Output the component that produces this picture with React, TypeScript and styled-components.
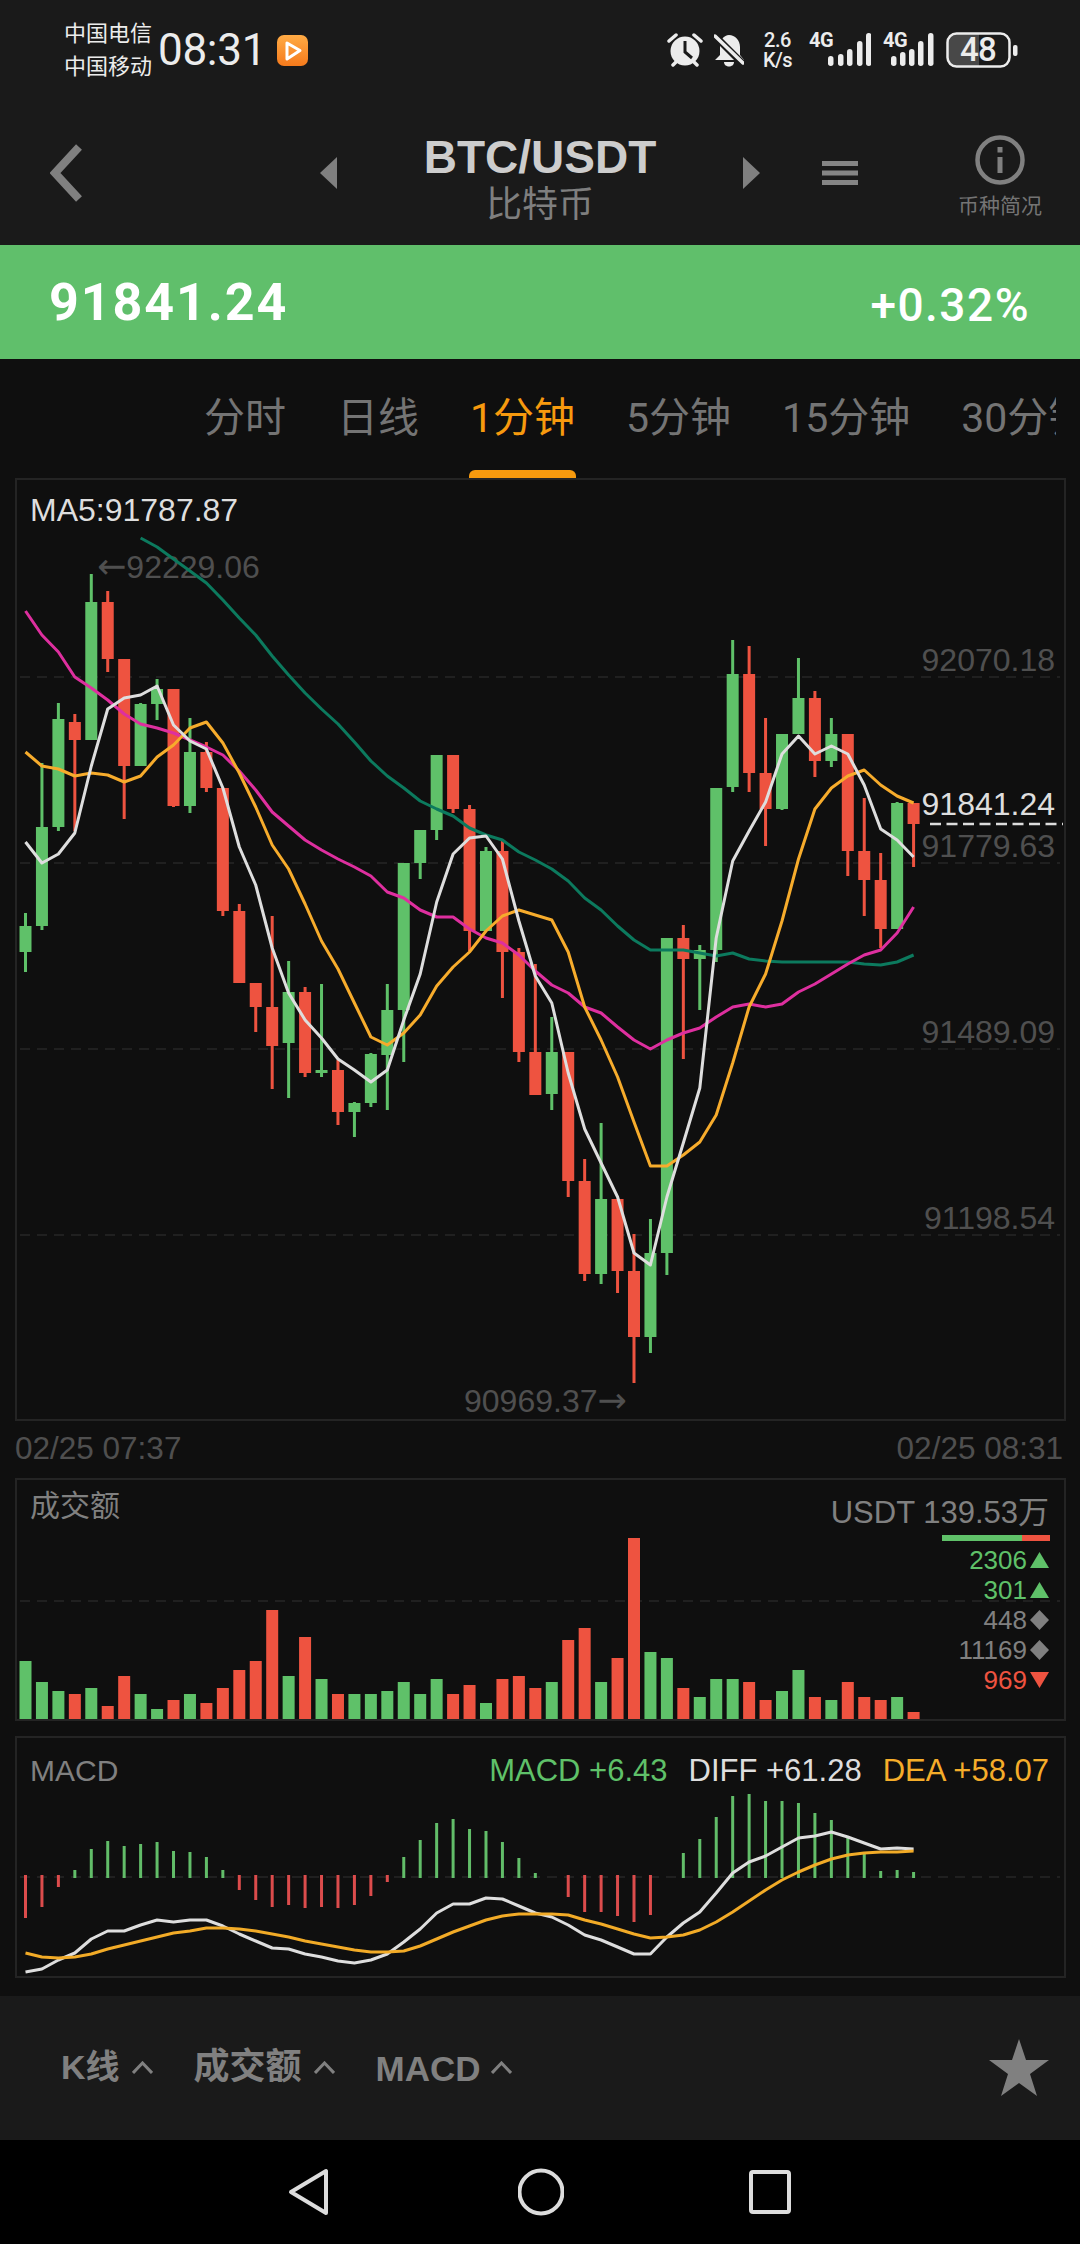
import React from "react";
import styled, { createGlobalStyle } from "styled-components";

const GREEN = "#5fc169";
const RED = "#ee5340";
const MUTED = "#4f4f4f";
const SANS = `"Liberation Sans", Arial, "Noto Sans CJK SC", sans-serif`;
const UI = `Roboto, "Noto Sans CJK SC", sans-serif`;

type CandleType = [number, number, number, number, "g" | "r"];

// high, body top, body bottom, low, in page pixels
const candles: CandleType[] = [
  [913, 926, 952, 972, "g"],
  [763, 827, 926, 930, "g"],
  [703, 719, 827, 831, "g"],
  [714, 722, 740, 831, "r"],
  [574, 602, 740, 740, "g"],
  [591, 602, 659, 672, "r"],
  [659, 659, 766, 819, "r"],
  [703, 704, 766, 766, "g"],
  [679, 689, 704, 720, "g"],
  [689, 689, 806, 807, "r"],
  [718, 752, 806, 813, "g"],
  [742, 752, 788, 792, "r"],
  [788, 788, 911, 916, "r"],
  [904, 911, 983, 983, "r"],
  [983, 983, 1007, 1032, "r"],
  [916, 1007, 1046, 1089, "r"],
  [961, 992, 1043, 1098, "g"],
  [987, 992, 1073, 1077, "r"],
  [984, 1070, 1073, 1077, "g"],
  [1060, 1070, 1112, 1125, "r"],
  [1102, 1103, 1112, 1137, "g"],
  [1053, 1054, 1103, 1107, "g"],
  [984, 1010, 1055, 1110, "g"],
  [863, 863, 1010, 1062, "g"],
  [830, 830, 863, 879, "g"],
  [755, 755, 830, 840, "g"],
  [755, 755, 809, 813, "r"],
  [805, 809, 931, 951, "r"],
  [847, 851, 931, 931, "g"],
  [841, 851, 952, 998, "r"],
  [948, 952, 1052, 1062, "r"],
  [964, 1052, 1095, 1095, "r"],
  [1017, 1052, 1094, 1110, "g"],
  [1052, 1052, 1181, 1197, "r"],
  [1159, 1181, 1274, 1281, "r"],
  [1123, 1199, 1274, 1284, "g"],
  [1199, 1199, 1271, 1293, "r"],
  [1234, 1271, 1337, 1383, "r"],
  [1219, 1253, 1337, 1353, "g"],
  [938, 938, 1253, 1275, "g"],
  [925, 938, 959, 1059, "r"],
  [945, 950, 959, 1010, "g"],
  [788, 788, 950, 962, "g"],
  [640, 674, 787, 792, "g"],
  [646, 674, 773, 792, "r"],
  [718, 773, 809, 846, "r"],
  [734, 734, 809, 810, "g"],
  [658, 698, 734, 734, "g"],
  [691, 698, 761, 777, "r"],
  [718, 734, 761, 767, "g"],
  [734, 734, 851, 876, "r"],
  [798, 851, 880, 916, "r"],
  [853, 880, 929, 948, "r"],
  [802, 803, 929, 929, "g"],
  [803, 803, 824, 867, "r"],
];

const ma5 = [842, 863, 854, 833, 766, 709, 698, 695, 686, 725, 741, 749, 788, 847, 885, 948, 993, 1020, 1038, 1059, 1070, 1082, 1070, 1020, 974, 902, 854, 838, 836, 859, 921, 976, 1003, 1073, 1129, 1163, 1197, 1253, 1265, 1197, 1143, 1088, 938, 861, 831, 802, 754, 736, 754, 746, 754, 785, 829, 840, 857];
const ma10 = [752, 766, 769, 776, 773, 775, 782, 776, 757, 745, 728, 722, 743, 773, 807, 845, 869, 904, 941, 969, 1003, 1037, 1045, 1033, 1015, 986, 967, 952, 931, 916, 910, 915, 920, 952, 1007, 1040, 1077, 1122, 1166, 1166, 1155, 1142, 1115, 1063, 1007, 974, 921, 859, 809, 788, 776, 770, 785, 796, 803];
const ma20 = [611, 635, 652, 677, 688, 700, 714, 724, 728, 733, 740, 747, 755, 771, 790, 812, 826, 840, 850, 859, 867, 876, 892, 898, 910, 917, 917, 929, 938, 943, 955, 971, 985, 993, 1007, 1013, 1027, 1040, 1049, 1040, 1033, 1028, 1017, 1007, 1004, 1007, 1004, 992, 984, 974, 964, 955, 950, 933, 907];
const ma30 = [538, 547, 559, 571, 583, 600, 618, 635, 656, 675, 693, 709, 724, 742, 761, 776, 788, 801, 809, 816, 828, 835, 840, 852, 860, 869, 881, 898, 910, 926, 940, 950, 950, 950, 953, 956, 953, 959, 961, 962, 962, 962, 962, 962, 964, 965, 962, 955];

const volumes = [58, 37, 28, 25, 31, 13, 43, 25, 10, 19, 25, 16, 31, 49, 58, 109, 43, 82, 40, 25, 25, 25, 28, 37, 25, 40, 25, 34, 16, 40, 43, 31, 37, 79, 91, 37, 61, 181, 67, 61, 31, 22, 40, 40, 37, 19, 28, 49, 22, 19, 37, 22, 19, 22, 7];

// histogram end, in page pixels
const histogram = [1918, 1907, 1887, 1870, 1849, 1841, 1846, 1844, 1842, 1851, 1852, 1857, 1870, 1890, 1900, 1907, 1905, 1908, 1907, 1908, 1905, 1896, 1882, 1857, 1840, 1823, 1819, 1829, 1831, 1842, 1858, 1873, 1882, 1897, 1912, 1912, 1916, 1922, 1915, 1873, 1853, 1839, 1817, 1796, 1794, 1801, 1801, 1803, 1813, 1820, 1838, 1854, 1871, 1870, 1872];
const histogramUp = "rrrggggggggggrrrrrrrrrrggggggggggrrrrrrrggggggggggggggggg".split("");
const diff = [1972, 1969, 1960, 1953, 1939, 1931, 1931, 1925, 1920, 1922, 1920, 1920, 1926, 1934, 1941, 1948, 1949, 1954, 1957, 1961, 1963, 1960, 1954, 1942, 1929, 1913, 1904, 1904, 1898, 1899, 1906, 1913, 1917, 1925, 1935, 1940, 1947, 1954, 1954, 1937, 1923, 1912, 1893, 1873, 1862, 1856, 1847, 1838, 1836, 1832, 1837, 1843, 1849, 1848, 1849];
const dea = [1953, 1957, 1958, 1957, 1954, 1949, 1945, 1941, 1937, 1933, 1931, 1928, 1928, 1929, 1931, 1934, 1937, 1941, 1944, 1947, 1950, 1952, 1952, 1951, 1946, 1939, 1932, 1926, 1920, 1916, 1914, 1914, 1914, 1915, 1920, 1924, 1929, 1934, 1938, 1937, 1935, 1930, 1922, 1912, 1901, 1890, 1880, 1872, 1865, 1859, 1855, 1853, 1852, 1852, 1851];

const xAt = (i: number) => 25.5 + 16.446 * i;
const toPoints = (values: number[], start = 0) =>
  values.map((y, i) => `${xAt(i + start).toFixed(1)},${y}`).join(" ");

const GlobalStyle = createGlobalStyle`
  html, body {
    margin: 0;
    background: #0f0f0f;
  }
`;

const Page = styled.div`
  width: 1080px;
  height: 2244px;
  overflow: hidden;
  background: #0f0f0f;
  font-family: ${SANS};
`;

const Top = styled.div`
  height: 245px;
  background: #1a1a1a;
`;

const StatusBar = styled.div`
  height: 100px;
  display: flex;
  align-items: center;
  padding: 0 62px 0 64px;
  color: #ececec;
  font-family: ${UI};
`;

const Carriers = styled.div`
  display: flex;
  flex-direction: column;
  gap: 4px;
  margin-top: -1px;
  font-size: 22px;
  line-height: 29px;
`;

const Clock = styled.div`
  margin-left: 6px;
  font-size: 44px;
  letter-spacing: -0.3px;
`;

const AppBadge = styled.svg`
  margin-left: 11px;
  width: 31px;
  height: 31px;
`;

const StatusRight = styled.div`
  margin-left: auto;
  display: flex;
  align-items: center;
`;

const StatusIcon = styled.svg<{ $ml: number }>`
  display: block;
  height: 36px;
  margin-left: ${(p) => p.$ml}px;
`;

const Speed = styled.div`
  margin-left: 18px;
  width: 31px;
  display: flex;
  flex-direction: column;
  align-items: center;
  font-size: 20px;
  line-height: 20px;
  font-weight: 500;
  letter-spacing: -0.5px;
`;

const Sim = styled.div<{ $ml: number; $width: number }>`
  position: relative;
  width: ${(p) => p.$width}px;
  height: 36px;
  margin-left: ${(p) => p.$ml}px;
`;

const SimLabel = styled.span`
  position: absolute;
  left: 0;
  top: -3px;
  font-size: 20px;
  line-height: 22px;
  font-weight: 700;
  letter-spacing: -0.5px;
`;

const SimBars = styled.svg`
  display: block;
  width: 100%;
  height: 100%;
`;

const Battery = styled.div`
  position: relative;
  width: 72px;
  height: 36px;
  margin-left: 12px;
`;

const BatteryLevel = styled.span`
  position: absolute;
  left: 14px;
  top: -1px;
  font-size: 33px;
  line-height: 38px;
  font-weight: 500;
  letter-spacing: -0.8px;
`;

const Header = styled.div`
  height: 145px;
  display: grid;
  grid-template-columns: 50px 270px 17px 406px 17px 62px 36px 1fr;
  align-items: center;
`;

const TitleBlock = styled.div`
  grid-column: 4;
  display: flex;
  flex-direction: column;
  align-items: center;
  margin-top: 12px;
`;

const Pair = styled.div`
  font-family: ${SANS};
  font-weight: 700;
  font-size: 46px;
  line-height: 52px;
  color: #cdcdcd;
`;

const PairName = styled.div`
  font-family: ${UI};
  font-size: 36px;
  line-height: 44px;
  color: #7f7f7f;
`;

const BackIcon = styled.svg`
  grid-column: 2;
  width: 33px;
  height: 58px;
`;

const ArrowIcon = styled.svg<{ $column: number }>`
  grid-column: ${(p) => p.$column};
  width: 17px;
  height: 32px;
`;

const MenuIcon = styled.svg`
  grid-column: 7;
  width: 36px;
  height: 24px;
`;

const InfoBlock = styled.div`
  grid-column: 8;
  justify-self: start;
  display: flex;
  flex-direction: column;
  align-items: center;
  margin: 8px 0 0 100px;
  font-family: ${UI};
  font-size: 21px;
  line-height: 26px;
  color: #747474;
`;

const InfoIcon = styled.svg`
  width: 50px;
  height: 50px;
  margin-bottom: 8px;
`;

const PriceBar = styled.div`
  height: 114px;
  padding: 0 50px 0 49px;
  display: flex;
  align-items: center;
  justify-content: space-between;
  background: #60bf6b;
  color: #fff;
  font-family: ${UI};
`;

const Price = styled.div`
  font-size: 52px;
  font-weight: 700;
  letter-spacing: 1.9px;
`;

const Change = styled.div`
  font-size: 46px;
  font-weight: 500;
  letter-spacing: 1.5px;
  margin-top: 6px;
`;

const Tabs = styled.div`
  height: 119px;
  width: 1056px;
  padding-left: 204px;
  box-sizing: border-box;
  overflow: hidden;
  display: flex;
  gap: 51px;
  align-items: flex-start;
  flex-wrap: nowrap;
`;

const Tab = styled.div<{ $active?: boolean }>`
  position: relative;
  height: 119px;
  flex: none;
  padding-top: 32px;
  box-sizing: border-box;
  font-family: ${UI};
  font-size: 41px;
  line-height: 54px;
  color: ${(p) => (p.$active ? "#f79a0e" : "#747474")};

  &::after {
    content: "";
    display: ${(p) => (p.$active ? "block" : "none")};
    position: absolute;
    left: -1px;
    right: -1px;
    bottom: 0;
    height: 8px;
    border-radius: 6px 6px 0 0;
    background: #f79a0e;
  }
`;

const Panel = styled.div<{ $height: number; $mt?: number }>`
  position: relative;
  height: ${(p) => p.$height}px;
  margin: ${(p) => p.$mt || 0}px 14px 0 15px;
  box-sizing: border-box;
  border: 2px solid #242424;
`;

const ChartSvg = styled.svg`
  position: absolute;
  left: -2px;
  top: -2px;
  display: block;
`;

const Label = styled.div<{ $top: number; $left?: number; $right?: number; $bright?: boolean }>`
  position: absolute;
  top: ${(p) => p.$top}px;
  ${(p) => (p.$left !== undefined ? `left: ${p.$left}px;` : "")}
  ${(p) => (p.$right !== undefined ? `right: ${p.$right}px;` : "")}
  font-size: 32px;
  line-height: 36px;
  white-space: nowrap;
  color: ${(p) => (p.$bright ? "#dedede" : MUTED)};
`;

const Pointer = styled.span`
  font-family: "DejaVu Sans", sans-serif;
  font-size: 35px;
`;

const TimeAxis = styled.div`
  height: 57px;
  padding: 0 17px 2px 15px;
  box-sizing: border-box;
  display: flex;
  align-items: center;
  justify-content: space-between;
  font-size: 31.5px;
  color: ${MUTED};
`;

const PanelTitle = styled.div<{ $top: number }>`
  position: absolute;
  left: 13px;
  top: ${(p) => p.$top}px;
  font-family: ${SANS};
  font-size: 30px;
  line-height: 36px;
  color: #808080;
`;

const Total = styled.div`
  position: absolute;
  right: 15px;
  top: 15px;
  font-size: 31px;
  line-height: 36px;
  color: #808080;
`;

const RatioBar = styled.div`
  position: absolute;
  left: 925px;
  top: 55px;
  width: 108px;
  height: 6px;
  display: flex;
  background: ${RED};
`;

const RatioFill = styled.div`
  height: 100%;
  background: ${GREEN};
`;

const Stats = styled.div`
  position: absolute;
  right: 15px;
  top: 65px;
  display: flex;
  flex-direction: column;
  align-items: flex-end;
`;

const StatRow = styled.div<{ $color: string }>`
  height: 30px;
  display: flex;
  align-items: center;
  gap: 3px;
  font-size: 26px;
  color: ${(p) => p.$color};
`;

const markerShapes = {
  up: "polygon(50% 0, 100% 100%, 0 100%)",
  down: "polygon(0 0, 100% 0, 50% 100%)",
  flat: "polygon(50% 0, 100% 50%, 50% 100%, 0 50%)",
};

const Marker = styled.span<{ $kind: keyof typeof markerShapes }>`
  width: 19px;
  height: ${(p) => (p.$kind === "flat" ? 20 : 16)}px;
  background: currentColor;
  clip-path: ${(p) => markerShapes[p.$kind]};
`;

const MacdLegend = styled.div`
  position: absolute;
  right: 15px;
  top: 15px;
  display: flex;
  gap: 21px;
  font-size: 31px;
  line-height: 36px;
  white-space: nowrap;
`;

const LegendItem = styled.span<{ $color: string }>`
  color: ${(p) => p.$color};
`;

const Footer = styled.div`
  height: 144px;
  margin-top: 18px;
  padding: 0 31px 0 61px;
  display: flex;
  align-items: center;
  background: #1a1a1a;
  color: #808080;
  font-family: ${SANS};
  font-weight: 700;
`;

const FooterItem = styled.div<{ $gap: number; $caretGap: number }>`
  display: flex;
  align-items: center;
  gap: ${(p) => p.$caretGap}px;
  margin-right: ${(p) => p.$gap}px;
`;

const FooterLabel = styled.span<{ $size: number; $shift: number }>`
  font-size: ${(p) => p.$size}px;
  transform: translateY(${(p) => p.$shift}px);
`;

const Caret = styled.svg`
  width: 21px;
  height: 13px;
  margin-top: -2px;
`;

const StarIcon = styled.svg`
  width: 60px;
  height: 57px;
  margin-left: auto;
  margin-top: -2px;
`;

const SystemNav = styled.div`
  height: 104px;
  display: grid;
  grid-template-columns: 288px 42px 188px 46px 185px 42px;
  align-items: center;
  background: #000;
`;

const NavIcon = styled.svg<{ $column: number }>`
  grid-column: ${(p) => p.$column};
  width: 100%;
  height: 48px;
`;

const Candle = ({ data, index }: { data: CandleType; index: number }) => {
  const x = xAt(index);
  const fill = data[4] === "g" ? GREEN : RED;
  return (
    <g fill={fill}>
      <rect x={x - 1.5} y={data[0]} width={3} height={data[3] - data[0]} />
      <rect x={x - 6} y={data[1]} width={12} height={Math.max(data[2] - data[1], 2)} />
    </g>
  );
};

const Line = ({ points, color, width = 3 }: { points: string; color: string; width?: number }) => (
  <polyline points={points} fill="none" stroke={color} strokeWidth={width} strokeLinejoin="round" />
);

const GridLine = ({ y }: { y: number }) => (
  <line x1={20} x2={1060} y1={y} y2={y} stroke="#272727" strokeWidth={1.5} strokeDasharray="10 7" />
);

const FooterCaret = () => (
  <Caret viewBox="0 0 21 13">
    <path d="M1 12 L10.5 2 L20 12" fill="none" stroke="#808080" strokeWidth="3" />
  </Caret>
);

const SignalBars = ({ bars, viewWidth }: { bars: number[][]; viewWidth: number }) => (
  <SimBars viewBox={`0 0 ${viewWidth} 36`}>
    {bars.map(([x, y]) => (
      <rect key={x} x={x} y={y} width={5.5} height={34 - y} rx={2.7} fill="#ececec" />
    ))}
  </SimBars>
);

export default function App() {
  return (
    <Page>
      <GlobalStyle />
      <Top>
        <StatusBar>
          <Carriers>
            <span>中国电信</span>
            <span>中国移动</span>
          </Carriers>
          <Clock>08:31</Clock>
          <AppBadge viewBox="0 0 31 31">
            <defs>
              <linearGradient id="badge" x1="0" y1="0" x2="0" y2="1">
                <stop offset="0" stopColor="#ffab45" />
                <stop offset="1" stopColor="#f57a1c" />
              </linearGradient>
            </defs>
            <rect width="31" height="31" rx="7" fill="url(#badge)" />
            <path d="M10 8 L10 24 L23 15.5 Z" fill="none" stroke="#fff" strokeWidth="3" strokeLinejoin="round" />
          </AppBadge>
          <StatusRight>
            <StatusIcon $ml={0} width="36" viewBox="0 0 36 36">
              <circle cx="18" cy="19" r="14.5" fill="#ececec" />
              <path d="M18 9 V20 L25 26" fill="none" stroke="#1a1a1a" strokeWidth="3" />
              <path d="M2 9 L9 3 M34 9 L27 3 M6 33 L9 30 M30 33 L27 30" stroke="#ececec" strokeWidth="3.5" strokeLinecap="round" />
            </StatusIcon>
            <StatusIcon $ml={11} width="30" viewBox="0 0 30 36">
              <path d="M1 28 L6 23 V14 C6 8 10 3 15 3 C21 3 26 8 26 15 V23 L30 28 Z" fill="#ececec" />
              <path d="M10 30 C10 36 20 36 20 30 Z" fill="#ececec" />
              <path d="M1 4 L29 32" stroke="#1a1a1a" strokeWidth="7" />
              <path d="M1 4 L29 31" stroke="#ececec" strokeWidth="3.5" strokeLinecap="round" />
            </StatusIcon>
            <Speed>
              <span>2.6</span>
              <span>K/s</span>
            </Speed>
            <Sim $ml={16} $width={62}>
              <SimLabel>4G</SimLabel>
              <SignalBars viewWidth={62} bars={[[19, 24], [29, 22], [38, 17], [48, 9], [57, 1]]} />
            </Sim>
            <Sim $ml={12} $width={51}>
              <SimLabel>4G</SimLabel>
              <SignalBars viewWidth={51} bars={[[8, 24], [17, 20], [26, 17], [35, 9], [45, 1]]} />
            </Sim>
            <Battery>
              <SimBars viewBox="0 0 72 36">
                <path d="M10 1.5 H33 V34.5 H10 A8.5 8.5 0 0 1 1.5 26 V10 A8.5 8.5 0 0 1 10 1.5 Z" fill="#484848" />
                <rect x="1.5" y="1.5" width="62" height="33" rx="9" fill="none" stroke="#ececec" strokeWidth="2.5" />
                <rect x="67" y="13" width="4.5" height="11" rx="2" fill="#ececec" />
              </SimBars>
              <BatteryLevel>48</BatteryLevel>
            </Battery>
          </StatusRight>
        </StatusBar>
        <Header>
          <BackIcon viewBox="0 0 33 58">
            <path d="M29 3 L5 29 L29 55" fill="none" stroke="#808080" strokeWidth="8" />
          </BackIcon>
          <ArrowIcon $column={3} viewBox="0 0 17 32">
            <path d="M17 0 V32 L0 16 Z" fill="#808080" />
          </ArrowIcon>
          <TitleBlock>
            <Pair>BTC/USDT</Pair>
            <PairName>比特币</PairName>
          </TitleBlock>
          <ArrowIcon $column={5} viewBox="0 0 17 32">
            <path d="M0 0 V32 L17 16 Z" fill="#808080" />
          </ArrowIcon>
          <MenuIcon viewBox="0 0 36 24">
            <path d="M0 2.5 H36 M0 12 H36 M0 21.5 H36" stroke="#858585" strokeWidth="5" />
          </MenuIcon>
          <InfoBlock>
            <InfoIcon viewBox="0 0 50 50">
              <circle cx="25" cy="25" r="22.5" fill="none" stroke="#808080" strokeWidth="4.5" />
              <rect x="22.5" y="12" width="5" height="5.5" fill="#808080" />
              <rect x="22.5" y="22" width="5" height="16" fill="#808080" />
            </InfoIcon>
            币种简况
          </InfoBlock>
        </Header>
      </Top>

      <PriceBar>
        <Price>91841.24</Price>
        <Change>+0.32%</Change>
      </PriceBar>

      <Tabs>
        <Tab>分时</Tab>
        <Tab>日线</Tab>
        <Tab $active>1分钟</Tab>
        <Tab>5分钟</Tab>
        <Tab>15分钟</Tab>
        <Tab>30分钟</Tab>
      </Tabs>

      <Panel $height={943}>
        <Label $left={13} $top={12} $bright>MA5:91787.87</Label>
        <Label $left={80} $top={68}><Pointer>←</Pointer>92229.06</Label>
        <Label $right={9} $top={162}>92070.18</Label>
        <Label $right={9} $top={348}>91779.63</Label>
        <Label $right={9} $top={534}>91489.09</Label>
        <Label $right={9} $top={720}>91198.54</Label>
        <Label $left={447} $top={902}>90969.37<Pointer>→</Pointer></Label>
        <ChartSvg width="1051" height="943" viewBox="15 478 1051 943">
          <GridLine y={677} />
          <GridLine y={863} />
          <GridLine y={1049} />
          <GridLine y={1235} />
          {candles.map((c, i) => (
            <Candle key={i} data={c} index={i} />
          ))}
          <Line points={toPoints(ma30, 7)} color="#0c7a5e" />
          <Line points={toPoints(ma20)} color="#de2f9f" />
          <Line points={toPoints(ma10)} color="#f7ac2c" />
          <Line points={toPoints(ma5)} color="#dedede" />
          <line x1={930} x2={1063} y1={824} y2={824} stroke="#dcdcdc" strokeWidth={2.5} strokeDasharray="11 5.5" />
        </ChartSvg>
        <Label $right={9} $top={306} $bright>91841.24</Label>
      </Panel>

      <TimeAxis>
        <span>02/25 07:37</span>
        <span>02/25 08:31</span>
      </TimeAxis>

      <Panel $height={243}>
        <ChartSvg width="1051" height="243" viewBox="15 1478 1051 243">
          <GridLine y={1601} />
          {volumes.map((h, i) => (
            <rect key={i} x={xAt(i) - 6} y={1719 - h} width={12} height={h} fill={candles[i][4] === "g" ? GREEN : RED} />
          ))}
        </ChartSvg>
        <PanelTitle $top={8}>成交额</PanelTitle>
        <Total>USDT 139.53万</Total>
        <RatioBar>
          <RatioFill style={{ width: `${(80 / 108) * 100}%` }} />
        </RatioBar>
        <Stats>
          <StatRow $color={GREEN}>2306<Marker $kind="up" /></StatRow>
          <StatRow $color={GREEN}>301<Marker $kind="up" /></StatRow>
          <StatRow $color="#808080">448<Marker $kind="flat" /></StatRow>
          <StatRow $color="#808080">11169<Marker $kind="flat" /></StatRow>
          <StatRow $color={RED}>969<Marker $kind="down" /></StatRow>
        </Stats>
      </Panel>

      <Panel $height={242} $mt={15}>
        <ChartSvg width="1051" height="242" viewBox="15 1736 1051 242">
          <GridLine y={1877} />
          {histogram.map((end, i) => {
            const up = histogramUp[i] === "g";
            return (
              <rect
                key={i}
                x={xAt(i) - 1.5}
                y={up ? end : 1875}
                width={3}
                height={up ? 1878 - end : end - 1875}
                fill={up ? "#62bd69" : "#dc4c4c"}
              />
            );
          })}
          <Line points={toPoints(diff)} color="#dedede" />
          <Line points={toPoints(dea)} color="#f2ab27" />
        </ChartSvg>
        <PanelTitle $top={15}>MACD</PanelTitle>
        <MacdLegend>
          <LegendItem $color={GREEN}>MACD +6.43</LegendItem>
          <LegendItem $color="#dedede">DIFF +61.28</LegendItem>
          <LegendItem $color="#f5ad2a">DEA +58.07</LegendItem>
        </MacdLegend>
      </Panel>

      <Footer>
        <FooterItem $gap={41} $caretGap={12}>
          <FooterLabel $size={34} $shift={-4}>K线</FooterLabel>
          <FooterCaret />
        </FooterItem>
        <FooterItem $gap={41} $caretGap={12}>
          <FooterLabel $size={36} $shift={-5}>成交额</FooterLabel>
          <FooterCaret />
        </FooterItem>
        <FooterItem $gap={0} $caretGap={10}>
          <FooterLabel $size={35} $shift={1}>MACD</FooterLabel>
          <FooterCaret />
        </FooterItem>
        <StarIcon viewBox="0 0 60 57">
          <path d="M30 0 L37 21 L60 21 L41 35 L48 57 L30 44 L12 57 L19 35 L0 21 L23 21 Z" fill="#808080" />
        </StarIcon>
      </Footer>

      <SystemNav>
        <NavIcon $column={2} viewBox="0 0 42 48">
          <path d="M38 3 V45 L3 24 Z" fill="none" stroke="#dcdcdc" strokeWidth="4" strokeLinejoin="round" />
        </NavIcon>
        <NavIcon $column={4} viewBox="0 0 46 48">
          <circle cx="23" cy="24" r="21.5" fill="none" stroke="#dcdcdc" strokeWidth="4" />
        </NavIcon>
        <NavIcon $column={6} viewBox="0 0 42 48">
          <rect x="2" y="4" width="38" height="40" rx="2" fill="none" stroke="#dcdcdc" strokeWidth="4" />
        </NavIcon>
      </SystemNav>
    </Page>
  );
}
